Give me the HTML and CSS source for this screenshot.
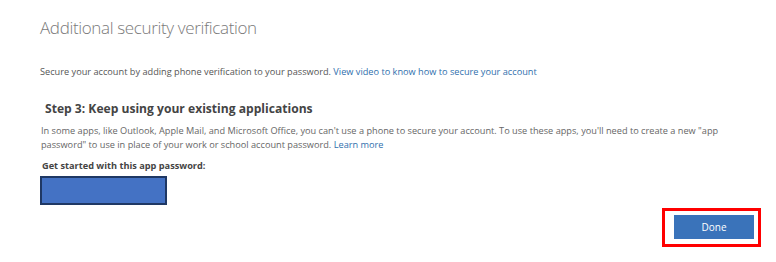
FILE: index.html
```html
<!DOCTYPE html>
<html lang="en">
<head>
<meta charset="utf-8">
<title>Additional security verification</title>
<link rel="stylesheet" href="styles.css">
</head>
<body>
<main class="page">
  <h1 class="title">Additional security verification</h1>
  <p class="intro">Secure your account by adding phone verification to your password. <a href="#" class="link">View video to know how to secure your account</a></p>
  <section class="step">
    <h2 class="step-title">Step 3: Keep using your existing applications</h2>
    <p class="step-text">In some apps, like Outlook, Apple Mail, and Microsoft Office, you can't use a phone to secure your account. To use these apps, you'll need to create a new "app<br>password" to use in place of your work or school account password. <a href="#" class="link">Learn more</a></p>
    <p class="step-label">Get started with this app password:</p>
    <div class="app-password"></div>
  </section>
  <div class="actions">
    <div class="highlight"><button class="done" type="button">Done</button></div>
  </div>
</main>
</body>
</html>
```
FILE: styles.css
```css
html, body {
  margin: 0;
  padding: 0;
  background: #ffffff;
}
body {
  font-family: "Open Sans", "Noto Sans", sans-serif;
  color: #555555;
}
.page {
  width: 776px;
  height: 262px;
  box-sizing: border-box;
  padding: 15px 0 0 40px;
  display: flex;
  flex-direction: column;
}
.title {
  margin: 0;
  font-size: 17px;
  font-weight: 300;
  letter-spacing: -0.35px;
  line-height: 26px;
  color: #7a7a7a;
}
.intro {
  margin: 24px 0 0 0;
  font-size: 9.2px;
  line-height: 14px;
  color: #555555;
}
.link {
  color: #2f6fad;
  text-decoration: none;
}
.step {
  margin-top: 21px;
  display: flex;
  flex-direction: column;
  align-items: flex-start;
}
.step-title {
  margin: 0 0 0 5px;
  font-size: 12.1px;
  font-weight: 700;
  line-height: 18px;
  color: #444444;
}
.step-text {
  margin: 6px 0 0 1px;
  width: 720px;
  font-size: 9.2px;
  line-height: 14px;
  color: #666666;
}
.step-label {
  margin: 7px 0 0 2px;
  font-size: 9.2px;
  font-weight: 700;
  line-height: 14px;
  color: #444444;
}
.app-password {
  margin-top: 3px;
  width: 123px;
  height: 25px;
  background: #4472c4;
  border: 2px solid #1f3864;
}
.actions {
  display: flex;
  justify-content: flex-end;
  padding-right: 15px;
  margin-top: 3px;
}
.highlight {
  border: 3px solid #ff0000;
  padding: 4px 4px 5px 9px;
  display: flex;
}
.done {
  width: 80px;
  height: 24px;
  border: none;
  margin: 0;
  background: #3a73ba;
  color: #ffffff;
  font-family: "Open Sans", "Noto Sans", sans-serif;
  font-size: 10px;
  padding: 0;
}
```
